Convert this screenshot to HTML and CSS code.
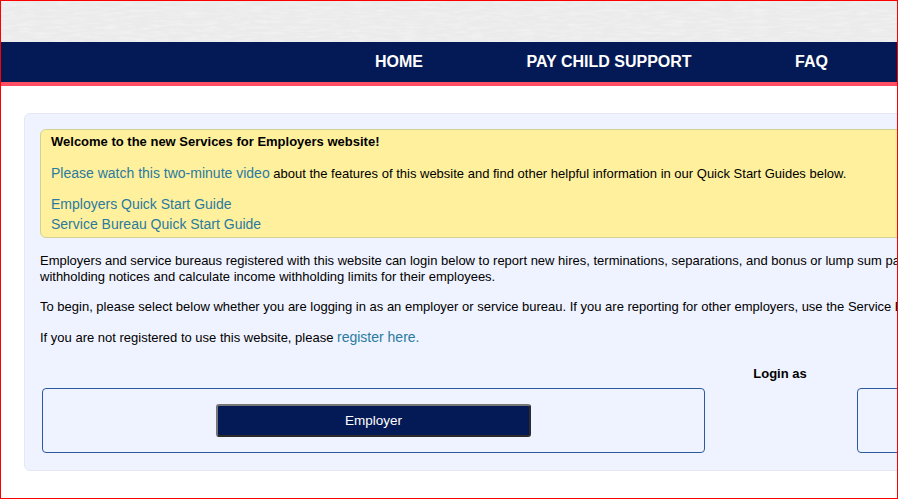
FILE: index.html
```html
<!DOCTYPE html>
<html lang="en">
<head>
<meta charset="utf-8">
<title>Services for Employers</title>
<link rel="stylesheet" href="styles.css">
</head>
<body>
<div class="frame">
  <header class="banner">
    <svg class="texture" width="896" height="41" aria-hidden="true">
      <filter id="grain" x="0" y="0" width="100%" height="100%">
        <feTurbulence type="fractalNoise" baseFrequency="0.06 0.35" numOctaves="3" seed="11"/>
        <feColorMatrix type="matrix" values="0 0 0 0 1  0 0 0 0 1  0 0 0 0 1  0.7 0 0 0 -0.28"/>
      </filter>
      <rect width="896" height="41" filter="url(#grain)"/>
    </svg>
  </header>
  <nav class="nav">
    <a class="nav-link" href="#">HOME</a>
    <a class="nav-link" href="#">PAY CHILD SUPPORT</a>
    <a class="nav-link" href="#">FAQ</a>
  </nav>
  <main class="content">
    <section class="panel">
      <div class="notice">
        <p class="notice-title">Welcome to the new Services for Employers website!</p>
        <p class="notice-video"><a class="link" href="#">Please watch this two-minute video</a> about the features of this website and find other helpful information in our Quick Start Guides below.</p>
        <p class="notice-guides"><a class="link" href="#">Employers Quick Start Guide</a><br><a class="link" href="#">Service Bureau Quick Start Guide</a></p>
      </div>
      <p class="copy">Employers and service bureaus registered with this website can login below to report new hires, terminations, separations, and bonus or lump sum payments, view income<br>withholding notices and calculate income withholding limits for their employees.</p>
      <p class="copy">To begin, please select below whether you are logging in as an employer or service bureau. If you are reporting for other employers, use the Service Bureau login.</p>
      <p class="copy">If you are not registered to use this website, please <a class="link" href="#">register here.</a></p>
      <h2 class="login-title">Login as</h2>
      <div class="login-row">
        <div class="login-box"><button class="login-btn" type="button">Employer</button></div>
        <div class="login-box"><button class="login-btn" type="button">Service Bureau</button></div>
      </div>
    </section>
  </main>
</div>
</body>
</html>
```
FILE: styles.css
```css
* { box-sizing: border-box; }
html, body { margin: 0; padding: 0; }
body {
  font-family: "Liberation Sans", Arial, sans-serif;
  font-size: 13px;
  color: #000;
  background: #fff;
}
.frame {
  width: 898px;
  height: 499px;
  border: 1px solid #f00;
  overflow: hidden;
}
.banner { height: 41px; background: #ebebeb; }
.texture { display: block; }
.nav {
  display: flex;
  gap: 103.5px;
  height: 44px;
  padding: 11px 0 0 374px;
  background: #041a56;
  border-bottom: 4px solid #ff4d64;
  white-space: nowrap;
}
.nav-link {
  color: #fff;
  font-size: 16px;
  font-weight: 700;
  line-height: 18px;
  text-decoration: none;
}
.content { padding: 27px 0 0 23px; }
.panel {
  width: 1512px;
  height: 358px;
  padding: 15px 15px 0;
  background: #eff3ff;
  border: 1px solid #e3e7f6;
  border-radius: 6px;
  white-space: nowrap;
}
.notice {
  height: 109px;
  padding: 4px 10px 0;
  background: #fff09e;
  border: 1px solid #d0d38f;
  border-radius: 6px;
}
.notice p { margin: 0; }
.notice-title { font-weight: 700; line-height: 16px; }
.notice .notice-video { margin-top: 14px; line-height: 20px; }
.notice .notice-guides { margin-top: 10px; font-size: 14px; line-height: 20px; }
.link { color: #2a7a9e; font-size: 14px; text-decoration: none; }
.notice .link { line-height: 1; }
.copy { margin: 15px 0 0; line-height: 16px; }
.copy + .copy { margin-top: 14px; }
.login-title {
  margin: 20px 0 0;
  font-size: 13px;
  line-height: 16px;
  text-align: center;
}
.login-row {
  display: flex;
  gap: 152px;
  margin: 6px 2px 0;
}
.login-box {
  display: flex;
  flex: none;
  justify-content: center;
  align-items: center;
  width: 663px;
  height: 65px;
  border: 1px solid #2c5a9e;
  border-radius: 4px;
}
.login-btn {
  width: 315px;
  height: 33px;
  padding: 0;
  color: #fff;
  font: 13.5px "Liberation Sans", Arial, sans-serif;
  background: #041a56;
  border: 2px solid;
  border-color: #767676 #2b2b2b #2b2b2b #767676;
  border-radius: 3px;
}
```
